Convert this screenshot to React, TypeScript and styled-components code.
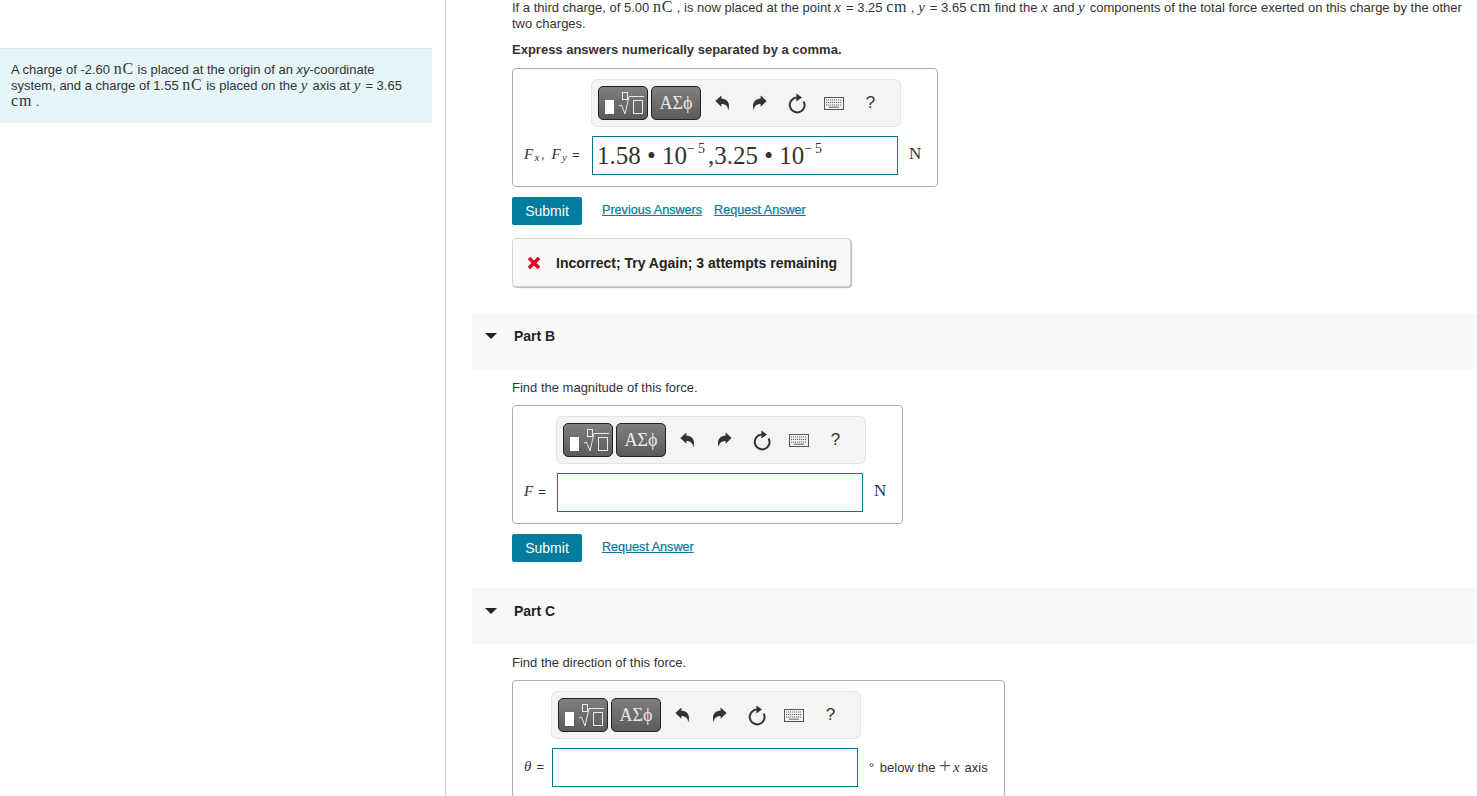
import React from "react";
import styled, { createGlobalStyle } from "styled-components";

const Global = createGlobalStyle`
  html, body { margin: 0; padding: 0; background: #fff; overflow: hidden; }
  body { font-family: "Liberation Sans", Arial, sans-serif; font-size: 13px; color: #333; }
`;

const Page = styled.div`
  display: flex;
  height: 796px;
  overflow: hidden;
`;
const LeftColumn = styled.aside`
  flex: 0 0 445px;
  padding-top: 48px;
  border-right: 1px solid #c8c8c8;
`;
const ContextBox = styled.div`
  width: 432px;
  box-sizing: border-box;
  height: 75px;
  padding: 13px 20px 0 11px;
  background: #e6f6f8;
  border-top: 1px solid #dfe5e6;
  font-size: 13px;
  line-height: 16px;
`;
const RightColumn = styled.main`
  flex: 1;
  min-width: 0;
  padding-left: 26px;
`;
const PartBody = styled.section`
  padding: 0 12px 0 40px;
`;
const Para = styled.p<{ $top?: number; $bold?: boolean }>`
  margin: ${(p) => p.$top ?? 0}px 0 0;
  font-size: 13px;
  line-height: 16px;
  font-weight: ${(p) => (p.$bold ? 700 : 400)};
`;
const MathItalic = styled.i`
  font-family: "Liberation Serif", serif;
  font-size: 15px;
  line-height: 0;
  letter-spacing: 1.4px;
`;
const MathRoman = styled.span`
  font-family: "Liberation Serif", serif;
  font-size: 16px;
  line-height: 0;
  letter-spacing: 0.8px;
`;
const PlusSign = styled.span`
  margin-right: 2px;
  font-family: "Liberation Serif", serif;
  font-size: 21px;
  line-height: 0;
  color: #555;
  vertical-align: -1px;
`;
const Sub = styled.sub`
  font-size: 11px;
  line-height: 0;
  vertical-align: -2px;
`;
const LabelComma = styled.span`
  margin-right: 7px;
`;
const AnswerBox = styled.div<{ $label: number; $top?: number }>`
  display: grid;
  grid-template-columns: ${(p) => p.$label}px 306px auto;
  row-gap: 9px;
  align-items: center;
  width: fit-content;
  margin-top: ${(p) => p.$top ?? 10}px;
  padding: 10px 16px 11px 11px;
  border: 1px solid #adadad;
  border-radius: 4px;
`;
const Toolbar = styled.div`
  grid-column: 2 / 4;
  justify-self: start;
  display: flex;
  align-items: center;
  box-sizing: border-box;
  width: 310px;
  height: 48px;
  margin-left: -1px;
  padding-left: 6px;
  background: #f4f4f4;
  border: 1px solid #e4e4e4;
  border-radius: 6px;
`;
const PaletteButton = styled.div`
  display: flex;
  align-items: center;
  justify-content: center;
  box-sizing: border-box;
  width: 50px;
  height: 34px;
  margin-right: 3px;
  border: 1px solid #222;
  border-radius: 5px;
  background: linear-gradient(#7f7f7f, #5b5b5b);
  color: #e8e8e8;
  font-family: "Liberation Serif", serif;
  font-size: 18px;
`;
const ToolIcon = styled.div`
  display: flex;
  align-items: center;
  justify-content: center;
  width: 37px;
  height: 34px;
  color: #333;
  font-size: 17px;
`;
const FieldLabel = styled.div`
  margin-bottom: 2px;
  white-space: nowrap;
  font-size: 13px;
  color: #333;
`;
const FieldInput = styled.div`
  box-sizing: border-box;
  height: 39px;
  padding-left: 4px;
  border: 1px solid #00769b;
  font-family: "Liberation Serif", serif;
  font-size: 25px;
  line-height: 37px;
  color: #333;
  white-space: nowrap;
`;
const Exponent = styled.sup`
  font-size: 14px;
  line-height: 0;
  letter-spacing: 3px;
  vertical-align: 11px;
`;
const Unit = styled.div<{ $serif?: boolean }>`
  margin: 0 0 ${(p) => (p.$serif ? 3 : 0)}px 11px;
  white-space: nowrap;
  font-family: ${(p) => (p.$serif ? '"Liberation Serif", serif' : '"Liberation Sans", sans-serif')};
  font-size: ${(p) => (p.$serif ? 17 : 13)}px;
`;
const Degree = styled.span`
  margin-right: 2px;
`;
const Actions = styled.div`
  display: flex;
  align-items: center;
  margin-top: 10px;
`;
const SubmitButton = styled.button`
  width: 70px;
  height: 28px;
  padding: 0;
  margin-right: 20px;
  border: 0;
  border-radius: 2px;
  background: #007c9e;
  color: #fff;
  font: 14px "Liberation Sans", sans-serif;
`;
const ActionLink = styled.a`
  margin: 0 12px 3px 0;
  color: #0b7a9c;
  font-size: 12.6px;
  -webkit-text-stroke: 0.25px #0b7a9c;
  text-decoration: underline;
`;
const Feedback = styled.div`
  display: flex;
  align-items: center;
  gap: 15px;
  box-sizing: border-box;
  width: 339px;
  height: 49px;
  margin-top: 13px;
  padding-left: 14px;
  background: #f9f9f9;
  border: 1px solid #d2d2d2;
  border-radius: 4px;
  box-shadow: 1px 1px 1px #bbb;
  color: #222;
  font-size: 14px;
  font-weight: 700;
`;
const PartHeader = styled.header`
  display: flex;
  align-items: center;
  box-sizing: border-box;
  height: 56px;
  margin-top: 26px;
  padding: 0 0 10px 13px;
  background: #f9f9f9;
  color: #222;
  font-size: 14px;
  font-weight: 700;
`;
const Caret = styled.span`
  width: 0;
  height: 0;
  margin-right: 17px;
  border-left: 6px solid transparent;
  border-right: 6px solid transparent;
  border-top: 6px solid #222;
`;

const RadicalIcon = () => (
  <svg width="48" height="32" viewBox="0 0 48 32" fill="none">
    <rect x="6" y="13" width="9" height="14" fill="#fff" />
    <rect x="23.5" y="5.5" width="5" height="7" stroke="#e8e8e8" />
    <path d="M20 19 L22.5 18 L26 27 L30 9.5 H45" stroke="#e8e8e8" />
    <rect x="34.5" y="13.5" width="9" height="13" stroke="#e8e8e8" />
  </svg>
);
const UndoIcon = ({ flip }: { flip?: boolean }) => (
  <svg width="15" height="16" viewBox="0 0 14 15" fill="#333" style={flip ? { transform: "scaleX(-1)" } : undefined}>
    <path d="M0.3 5.6 L6 0.4 V3.4 C11.5 3.4 14.6 7.4 12.4 14.4 C12 10.4 10 8.4 6 8.4 V11 Z" />
  </svg>
);
const ResetIcon = () => (
  <svg width="18" height="21" viewBox="0 0 18 21" fill="none">
    <path d="M15.6 8.4 A7.4 7.4 0 1 1 8.6 4.6" stroke="#333" strokeWidth="2" />
    <path d="M8.4 0.6 L14 4.6 L8.4 8.4 Z" fill="#333" />
  </svg>
);
const KeyboardIcon = () => (
  <svg width="20" height="13" viewBox="0 0 20 13" fill="none">
    <rect x="0.5" y="0.5" width="19" height="12" fill="#f2f2f2" stroke="#555" />
    <path d="M2 3 H18 M2 5.5 H18 M2 8 H18" stroke="#666" strokeDasharray="1.2 0.8" />
    <path d="M5 10.2 H15" stroke="#666" />
  </svg>
);
const CrossIcon = () => (
  <svg width="14" height="14" viewBox="0 0 14 14">
    <path d="M2 2 L12 12 M12 2 L2 12" stroke="#e0002a" strokeWidth="3.6" />
  </svg>
);

const EditorToolbar = () => (
  <Toolbar>
    <PaletteButton>
      <RadicalIcon />
    </PaletteButton>
    <PaletteButton>ΑΣϕ</PaletteButton>
    <ToolIcon>
      <UndoIcon />
    </ToolIcon>
    <ToolIcon>
      <UndoIcon flip />
    </ToolIcon>
    <ToolIcon>
      <ResetIcon />
    </ToolIcon>
    <ToolIcon>
      <KeyboardIcon />
    </ToolIcon>
    <ToolIcon>?</ToolIcon>
  </Toolbar>
);

export default function App() {
  return (
    <Page>
      <Global />
      <LeftColumn>
        <ContextBox>
          A charge of -2.60 <MathRoman>nC</MathRoman> is placed at the origin of an <em>xy</em>-coordinate system, and a
          charge of 1.55 <MathRoman>nC</MathRoman> is placed on the <MathItalic>y</MathItalic> axis at{" "}
          <MathItalic>y</MathItalic> = 3.65 <MathRoman>cm</MathRoman> .
        </ContextBox>
      </LeftColumn>
      <RightColumn>
        <PartBody>
          <Para>
            If a third charge, of 5.00 <MathRoman>nC</MathRoman> , is now placed at the point <MathItalic>x</MathItalic> ={" "}
            3.25 <MathRoman>cm</MathRoman> , <MathItalic>y</MathItalic> = 3.65 <MathRoman>cm</MathRoman> find the{" "}
            <MathItalic>x</MathItalic> and <MathItalic>y</MathItalic> components of the total force exerted on this charge
            by the other two charges.
          </Para>
          <Para $top={10} $bold>
            Express answers numerically separated by a comma.
          </Para>
          <AnswerBox $label={68}>
            <EditorToolbar />
            <FieldLabel>
              <MathItalic>
                F<Sub>x</Sub>
              </MathItalic>
              <LabelComma>,</LabelComma>
              <MathItalic>
                F<Sub>y</Sub>
              </MathItalic>{" "}
              =
            </FieldLabel>
            <FieldInput>
              1.58 • 10<Exponent>−5</Exponent>,3.25 • 10<Exponent>−5</Exponent>
            </FieldInput>
            <Unit $serif>N</Unit>
          </AnswerBox>
          <Actions>
            <SubmitButton>Submit</SubmitButton>
            <ActionLink href="#">Previous Answers</ActionLink>
            <ActionLink href="#">Request Answer</ActionLink>
          </Actions>
          <Feedback>
            <CrossIcon />
            Incorrect; Try Again; 3 attempts remaining
          </Feedback>
        </PartBody>

        <PartHeader>
          <Caret />
          Part B
        </PartHeader>
        <PartBody>
          <Para $top={11}>Find the magnitude of this force.</Para>
          <AnswerBox $label={33} $top={9}>
            <EditorToolbar />
            <FieldLabel>
              <MathItalic>F</MathItalic> =
            </FieldLabel>
            <FieldInput />
            <Unit $serif>N</Unit>
          </AnswerBox>
          <Actions>
            <SubmitButton>Submit</SubmitButton>
            <ActionLink href="#">Request Answer</ActionLink>
          </Actions>
        </PartBody>

        <PartHeader>
          <Caret />
          Part C
        </PartHeader>
        <PartBody>
          <Para $top={11}>Find the direction of this force.</Para>
          <AnswerBox $label={28} $top={9}>
            <EditorToolbar />
            <FieldLabel>
              <MathItalic>θ</MathItalic> =
            </FieldLabel>
            <FieldInput />
            <Unit>
              <Degree>°</Degree> below the <PlusSign>+</PlusSign>
              <MathItalic>x</MathItalic> axis
            </Unit>
          </AnswerBox>
        </PartBody>
      </RightColumn>
    </Page>
  );
}
